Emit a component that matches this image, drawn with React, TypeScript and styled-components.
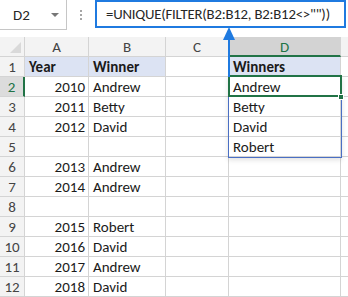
import styled, { createGlobalStyle } from 'styled-components'

const GlobalStyle = createGlobalStyle`
  html, body {
    margin: 0;
    padding: 0;
    background: #ffffff;
  }
  body {
    font-family: Carlito, Lato, "Liberation Sans", sans-serif;
    width: 348px;
    height: 297px;
    overflow: hidden;
  }
`

const Page = styled.div`
  position: relative;
  width: 348px;
  height: 297px;
  overflow: hidden;
  background: #fff;
`

// formula bar ---------------------------------------------------

const FormulaBar = styled.div`
  display: flex;
  align-items: flex-start;
  height: 37px;
`

const NameBox = styled.div`
  box-sizing: border-box;
  width: 68px;
  height: 30px;
  margin-left: -1px;
  border: 1px solid #c6c6c6;
  border-top: none;
  display: flex;
  align-items: center;
  justify-content: space-between;
  padding: 0 7px 0 13px;
  font-size: 15px;
  color: #262626;
`

const DropArrow = styled.span`
  width: 0;
  height: 0;
  border-left: 4px solid transparent;
  border-right: 4px solid transparent;
  border-top: 4px solid #777;
`

const Dots = styled.div`
  width: 28px;
  height: 30px;
  display: flex;
  flex-direction: column;
  align-items: center;
  justify-content: center;
  gap: 2px;
  & > span {
    width: 2px;
    height: 2px;
    background: #a6a6a6;
  }
`

const FormulaBox = styled.div`
  box-sizing: border-box;
  flex: 1;
  height: 28px;
  margin-right: 2px;
  border: 2px solid #1f7ae0;
  display: flex;
  align-items: center;
  padding-left: 9px;
  font-size: 14.75px;
  letter-spacing: -0.2px;
  color: #262626;
  white-space: nowrap;
`

// sheet ---------------------------------------------------------

const Sheet = styled.div`
  position: relative;
  display: grid;
  grid-template-columns: 25px 64px 77px 63px 112px 1fr;
  grid-auto-rows: 20px;
`

const Corner = styled.div`
  position: relative;
  box-sizing: border-box;
  background: #f3f3f3;
  border-right: 1px solid #d4d4d4;
  border-bottom: 1px solid #d4d4d4;
  &::after {
    content: '';
    position: absolute;
    right: 3px;
    bottom: 3px;
    width: 0;
    height: 0;
    border-left: 11px solid transparent;
    border-bottom: 11px solid #d9d9d9;
  }
`

const ColHead = styled.div<{ $active?: boolean }>`
  box-sizing: border-box;
  display: flex;
  align-items: center;
  justify-content: center;
  padding-top: 1px;
  font-size: 15px;
  background: ${(p) => (p.$active ? '#d3d3d3' : '#f3f3f3')};
  color: ${(p) => (p.$active ? '#217346' : '#444')};
  border-right: 1px solid #d4d4d4;
  border-bottom: ${(p) => (p.$active ? '2px solid #217346' : '1px solid #d4d4d4')};
`

const RowHead = styled.div<{ $active?: boolean }>`
  box-sizing: border-box;
  display: flex;
  align-items: center;
  justify-content: center;
  padding-top: 1px;
  font-size: 15px;
  background: ${(p) => (p.$active ? '#dcdcdc' : '#f3f3f3')};
  color: ${(p) => (p.$active ? '#217346' : '#444')};
  border-right: ${(p) => (p.$active ? '2px solid #217346' : '1px solid #d4d4d4')};
  border-bottom: 1px solid #d4d4d4;
`

const Cell = styled.div<{ $head?: boolean; $num?: boolean }>`
  box-sizing: border-box;
  display: flex;
  align-items: flex-end;
  justify-content: ${(p) => (p.$num ? 'flex-end' : 'flex-start')};
  padding: 0 3px 0 4px;
  font-size: 15px;
  line-height: 18px;
  font-weight: ${(p) => (p.$head ? 700 : 400)};
  color: #1a1a1a;
  background: ${(p) => (p.$head ? '#dce3f3' : '#fff')};
  border-right: 1px solid #d4d4d4;
  border-bottom: 1px solid #d4d4d4;
  white-space: nowrap;
`

const SpillRange = styled.div`
  position: absolute;
  left: 228px;
  top: 39px;
  width: 114px;
  height: 82px;
  box-sizing: border-box;
  border: 1px solid #4a6fc4;
  box-shadow: 0 2px 5px rgba(0, 0, 0, 0.12);
  pointer-events: none;
`

const Selection = styled.div`
  position: absolute;
  left: 228px;
  top: 38px;
  width: 114px;
  height: 22px;
  box-sizing: border-box;
  border: 2px solid #217346;
  pointer-events: none;
`

const FillHandle = styled.div`
  position: absolute;
  left: 338px;
  top: 57px;
  width: 6px;
  height: 6px;
  box-sizing: border-box;
  background: #217346;
  border: 1px solid #fff;
`

const Arrow = styled.svg`
  position: absolute;
  left: 222px;
  top: 27px;
`

const cols = ['A', 'B', 'C', 'D', 'E']

type Row = [number | '', string, string, string]

const rows: Row[] = [
  ['', '', '', ''],
  [2010, 'Andrew', '', 'Andrew'],
  [2011, 'Betty', '', 'Betty'],
  [2012, 'David', '', 'David'],
  ['', '', '', 'Robert'],
  [2013, 'Andrew', '', ''],
  [2014, 'Andrew', '', ''],
  ['', '', '', ''],
  [2015, 'Robert', '', ''],
  [2016, 'David', '', ''],
  [2017, 'Andrew', '', ''],
  [2018, 'David', '', ''],
]

export default function App() {
  return (
    <Page>
      <GlobalStyle />
      <FormulaBar>
        <NameBox>
          D2
          <DropArrow />
        </NameBox>
        <Dots>
          <span />
          <span />
          <span />
        </Dots>
        <FormulaBox>=UNIQUE(FILTER(B2:B12, B2:B12&lt;&gt;""))</FormulaBox>
      </FormulaBar>

      <Sheet>
        <Corner />
        {cols.map((c) => (
          <ColHead key={c} $active={c === 'D'}>
            {c === 'E' ? '' : c}
          </ColHead>
        ))}

        {rows.map((r, i) =>
          i === 0 ? (
            [
              <RowHead key="h1">1</RowHead>,
              <Cell key="a1" $head>Year</Cell>,
              <Cell key="b1" $head>Winner</Cell>,
              <Cell key="c1" />,
              <Cell key="d1" $head>Winners</Cell>,
              <Cell key="e1" />,
            ]
          ) : (
            [
              <RowHead key={'h' + i} $active={i === 1}>
                {i + 1}
              </RowHead>,
              <Cell key={'a' + i} $num>
                {r[0]}
              </Cell>,
              <Cell key={'b' + i}>{r[1]}</Cell>,
              <Cell key={'c' + i}>{r[2]}</Cell>,
              <Cell key={'d' + i}>{r[3]}</Cell>,
              <Cell key={'e' + i} />,
            ]
          )
        )}

        <SpillRange />
        <Selection />
        <FillHandle />
      </Sheet>

      <Arrow width="14" height="50" viewBox="0 0 14 50">
        <path d="M7 0 L13 13 L1 13 Z" fill="#1f7ae0" />
        <rect x="6" y="12" width="2" height="38" fill="#1f7ae0" />
      </Arrow>
    </Page>
  )
}
